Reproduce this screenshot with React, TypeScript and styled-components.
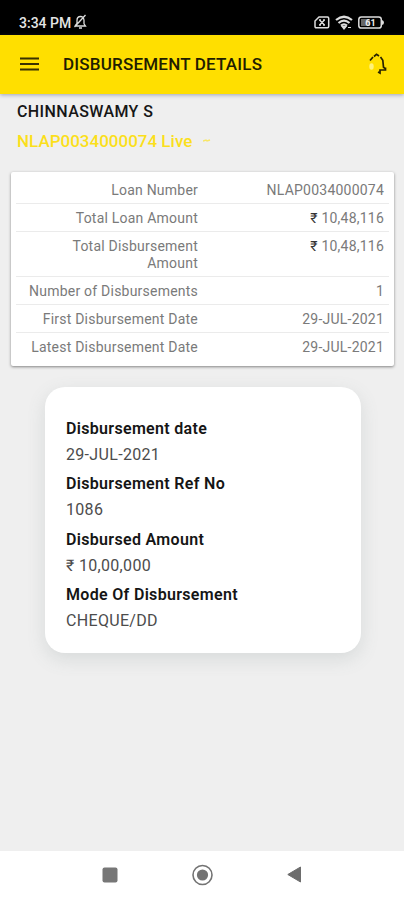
import React from "react";
import styled, { createGlobalStyle } from "styled-components";

const GlobalStyle = createGlobalStyle`
  * { box-sizing: border-box; }
  body { margin: 0; background: #efefef; font-family: Roboto, "Noto Sans", sans-serif; }
  svg { display: block; flex: none; }
`;

const Screen = styled.div`
  width: 404px;
  height: 900px;
  display: flex;
  flex-direction: column;
  overflow: hidden;
  background: #efefef;
`;

const StatusBar = styled.div`
  height: 35px;
  flex: none;
  display: flex;
  align-items: center;
  padding: 9px 20px 0 19px;
  background: #000;
  color: #e4e4e4;
`;

const Clock = styled.span`
  font-size: 14px;
  font-weight: 500;
  line-height: 16px;
  padding-top: 1px;
  margin-right: 2px;
`;

const StatusIcons = styled.div`
  display: flex;
  align-items: center;
  gap: 5px;
  margin-left: auto;
`;

const AppBar = styled.header`
  height: 59px;
  flex: none;
  display: flex;
  align-items: center;
  padding: 0 16px 2px 20px;
  background: #ffdf00;
  box-shadow: 0 1px 4px rgba(60, 70, 110, 0.45);
  z-index: 1;
`;

const Title = styled.h1`
  margin: 0 auto 0 24px;
  font-size: 17px;
  font-weight: 500;
  line-height: 20px;
  letter-spacing: 0.2px;
  color: #211d00;
`;

const Content = styled.main`
  flex: 1;
  display: flex;
  flex-direction: column;
`;

const Customer = styled.section`
  padding: 8px 17px 0;
  height: 78px;
`;

const CustomerName = styled.div`
  font-size: 16px;
  font-weight: 500;
  line-height: 20px;
  letter-spacing: 0.4px;
  color: #161616;
`;

const LoanPicker = styled.div`
  display: flex;
  align-items: center;
  gap: 11px;
  margin-top: 9px;
  font-size: 17px;
  font-weight: 500;
  line-height: 20px;
  color: #fbdf1c;
`;

const Summary = styled.section`
  margin: 0 10px 0 11px;
  height: 194px;
  padding: 4px 5px 5px;
  background: #fff;
  border-radius: 2px;
  box-shadow: 0 1px 3px rgba(0, 0, 0, 0.45);
`;

const SummaryRow = styled.div`
  display: grid;
  grid-template-columns: 182px 1fr;
  padding: 6px 5px 4px 0;
  border-bottom: 1px solid #ebebeb;
  font-size: 14px;
  line-height: 17px;
  letter-spacing: 0.22px;
  color: #7a7a7a;
  text-align: right;
  &:last-child { border-bottom: 0; }
`;

const SummaryLabel = styled.span`
  padding-left: 10px;
`;

const SummaryValue = styled.span``;

const Rupee = styled.span<{ $dark?: boolean }>`
  color: ${(p) => (p.$dark ? "#333" : "inherit")};
`;

const Details = styled.section`
  width: 316px;
  height: 266px;
  margin: 21px 0 0 45px;
  padding: 29px 21px;
  background: #fff;
  border-radius: 20px;
  box-shadow: 0 6px 18px rgba(100, 120, 120, 0.17);
`;

const Field = styled.div`
  height: 55.4px;
  font-size: 16px;
  line-height: 26px;
  letter-spacing: 0.32px;
`;

const FieldLabel = styled.div`
  font-weight: 600;
  color: #151515;
`;

const FieldValue = styled.div`
  color: #4c4c4c;
`;

const NavBar = styled.nav`
  height: 49px;
  flex: none;
  display: flex;
  align-items: center;
  justify-content: space-between;
  padding: 0 102px 2px;
  background: #fff;
`;

const MutedBell = () => (
  <svg width="14" height="16" viewBox="0 0 14 16" fill="none" stroke="#ddd" strokeWidth="1.3">
    <path d="M2 12h10.5L11 9.8V6.5C11 4 9.5 2.5 7.5 2.5S4 4.2 4 6.5v3L2 12M6 14h3M1.5 13 12.5 1" />
  </svg>
);

const SimIcon = () => (
  <svg width="16" height="13" viewBox="0 0 16 13" fill="none" stroke="#ddd" strokeWidth="1.5">
    <path d="M5 1h8.500q1.200 0 1.200 1.200v8.400q0 1.200-1.200 1.200H2.200Q1 11.800 1 10.600V5z" />
    <path d="m5.500 4 5 5M10.500 4l-5 5M5 4h2M9 4h2M5 9h2M9 9h2" strokeWidth="1.300" />
  </svg>
);

const WifiIcon = () => (
  <svg width="18" height="15" viewBox="0 0 18 15" fill="none" stroke="#ddd" strokeWidth="2.200">
    <path d="M1 5q8-6.500 16 0M3.500 8q5.500-4.800 11 0M6 10.600q3-2.500 6 0" />
    <path d="m7 11.500 2 2.500 2-2.500zM13 12.500h3" strokeWidth="1.200" fill="#ddd" />
  </svg>
);

const BatteryIcon = () => (
  <svg width="26" height="13" viewBox="0 0 26 13">
    <rect x="0.800" y="1" width="22.500" height="11" rx="2.600" fill="none" stroke="#ddd" strokeWidth="1.500" />
    <rect x="3" y="3" width="9" height="7" fill="#666" />
    <path d="M24 4q2 .5 2 2.500T24 9z" fill="#ddd" />
    <text x="12.500" y="9.800" textAnchor="middle" fontSize="9" fontWeight="700" fill="#eee">61</text>
  </svg>
);

const MenuIcon = () => (
  <svg width="19" height="14" viewBox="0 0 19 14" stroke="#393100" strokeWidth="1.800">
    <path d="M0 1.500h19M0 7h19M0 12.500h19" />
  </svg>
);

const BellIcon = () => (
  <svg width="20" height="24" viewBox="0 0 20 24" fill="none">
    <ellipse cx="3.500" cy="14.500" rx="2.200" ry="3.200" fill="#fff27c" />
    <path d="M2 8.500 5 5M6 4.500l2.500-2.200L11 4M12.500 5l2.300 3.200.7 7 2.500 2M17.500 15.500v2.500H12v3L10 20" stroke="#282300" strokeWidth="1.700" />
  </svg>
);

const Caret = () => (
  <svg width="8" height="4" viewBox="0 0 8 4" fill="none" stroke="#f8e666" strokeWidth="1.400">
    <path d="m0 2 3-1 1 1 3-1" />
  </svg>
);

const SquareIcon = () => (
  <svg width="16" height="16" viewBox="0 0 16 16">
    <rect x="0.500" y="0.500" width="15" height="15" rx="2" fill="#777" />
  </svg>
);

const HomeIcon = () => (
  <svg width="22" height="22" viewBox="0 0 22 22">
    <circle cx="10.500" cy="11" r="9.500" fill="none" stroke="#737373" strokeWidth="1.600" />
    <circle cx="10.500" cy="11" r="5.600" fill="#737373" />
  </svg>
);

const BackIcon = () => (
  <svg width="15" height="17" viewBox="0 0 15 17">
    <path d="M13.500 1v15L0.800 8.500z" fill="#6d6d6d" stroke="#6d6d6d" strokeLinejoin="round" />
  </svg>
);

const summary = [
  { label: "Loan Number", value: "NLAP0034000074" },
  { label: "Total Loan Amount", value: "10,48,116", money: true },
  { label: "Total Disbursement Amount", value: "10,48,116", money: true },
  { label: "Number of Disbursements", value: "1" },
  { label: "First Disbursement Date", value: "29-JUL-2021" },
  { label: "Latest Disbursement Date", value: "29-JUL-2021" },
];

const details = [
  { label: "Disbursement date", value: "29-JUL-2021" },
  { label: "Disbursement Ref No", value: "1086" },
  { label: "Disbursed Amount", value: "10,00,000", money: true },
  { label: "Mode Of Disbursement", value: "CHEQUE/DD" },
];

export default function App() {
  return (
    <>
      <GlobalStyle />
      <Screen>
        <StatusBar>
          <Clock>3:34 PM</Clock>
          <MutedBell />
          <StatusIcons>
            <SimIcon />
            <WifiIcon />
            <BatteryIcon />
          </StatusIcons>
        </StatusBar>
        <AppBar>
          <MenuIcon />
          <Title>DISBURSEMENT DETAILS</Title>
          <BellIcon />
        </AppBar>
        <Content>
          <Customer>
            <CustomerName>CHINNASWAMY S</CustomerName>
            <LoanPicker>
              NLAP0034000074 Live
              <Caret />
            </LoanPicker>
          </Customer>
          <Summary>
            {summary.map((r) => (
              <SummaryRow key={r.label}>
                <SummaryLabel>{r.label}</SummaryLabel>
                <SummaryValue>
                  {r.money && <Rupee $dark>₹ </Rupee>}
                  {r.value}
                </SummaryValue>
              </SummaryRow>
            ))}
          </Summary>
          <Details>
            {details.map((d) => (
              <Field key={d.label}>
                <FieldLabel>{d.label}</FieldLabel>
                <FieldValue>
                  {d.money && <Rupee>₹ </Rupee>}
                  {d.value}
                </FieldValue>
              </Field>
            ))}
          </Details>
        </Content>
        <NavBar>
          <SquareIcon />
          <HomeIcon />
          <BackIcon />
        </NavBar>
      </Screen>
    </>
  );
}
